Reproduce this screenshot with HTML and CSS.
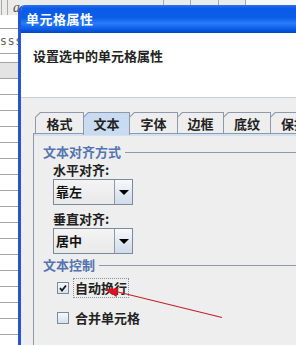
FILE: index.html
```html
<!DOCTYPE html>
<html>
<head>
<meta charset="utf-8">
<link rel="stylesheet" href="styles.css">
</head>
<body>
<div class="sheet">
  <div class="hdr">
    <div class="hc w2"></div>
    <div class="hc w6"></div>
    <div class="hc w156"><span class="ital">a</span></div>
    <div class="hc w27"></div>
    <div class="hc w28"></div>
    <div class="hc w27"></div>
    <div class="hrest"></div>
  </div>
  <div class="row h13"></div>
  <div class="row h24 sss">ssss</div>
  <div class="row h8"></div>
  <div class="row h15 gray"></div>
  <div class="row"></div><div class="row"></div><div class="row"></div><div class="row"></div>
  <div class="row"></div><div class="row"></div><div class="row"></div><div class="row"></div>
  <div class="row"></div><div class="row"></div><div class="row"></div><div class="row"></div>
  <div class="row"></div><div class="row"></div><div class="row"></div><div class="row"></div>
  <div class="row"></div>
</div>

<div class="dialog">
  <div class="titlebar">单元格属性</div>
  <div class="header">设置选中的单元格属性</div>
  <div class="content">
    <div class="tabs">
      <div class="tab t1"><span>格式</span></div>
      <div class="tab t2 sel"><span>文本</span></div>
      <div class="tab t1"><span>字体</span></div>
      <div class="tab t2"><span>边框</span></div>
      <div class="tab t3"><span>底纹</span></div>
      <div class="tab t3"><span>保护</span></div>
    </div>
    <div class="panel">
      <div class="gtitle g1"><span>文本对齐方式</span><i class="gline"></i></div>
      <div class="flabel l1">水平对齐:</div>
      <div class="combo c1"><span class="val">靠左</span><span class="btn"><i class="tri"></i></span></div>
      <div class="flabel l2">垂直对齐:</div>
      <div class="combo c1"><span class="val">居中</span><span class="btn"><i class="tri"></i></span></div>
      <div class="gtitle g2"><span>文本控制</span><i class="gline"></i></div>
      <div class="check r1">
        <span class="box"><svg width="10" height="10" viewBox="0 0 10 10"><path d="M2 5 L4 7.5 L8 2.5" fill="none" stroke="#1a1a1a" stroke-width="1.8"/></svg></span>
        <span class="clabel focus">自动换行</span>
      </div>
      <div class="check r2">
        <span class="box"></span>
        <span class="clabel">合并单元格</span>
      </div>
    </div>
  </div>
</div>

<svg class="annot" width="296" height="345" viewBox="0 0 296 345">
  <line x1="114" y1="291" x2="222" y2="317.5" stroke="#c2202c" stroke-width="1.2"/>
  <polygon points="105,289.5 118.5,288 116.5,297" fill="#e0101c"/>
</svg>
</body>
</html>
```

FILE: styles.css
```css
html, body {
  margin: 0;
  padding: 0;
}
body {
  width: 296px;
  height: 345px;
  overflow: hidden;
  position: relative;
  background: #ffffff;
  font-family: "Noto Sans CJK SC", "Noto Sans", sans-serif;
}

/* background spreadsheet */
.sheet {
  display: flex;
  flex-direction: column;
}
.hdr {
  display: flex;
  height: 15px;
  background: #ebebeb;
}
.hc {
  box-sizing: border-box;
  border-right: 1px solid #a9a9a9;
  height: 15px;
}
.w2 { width: 2px; }
.w6 { width: 6px; }
.w156 { width: 156px; }
.w27 { width: 27px; }
.w28 { width: 28px; }
.hrest { flex: 1; background: #f7f7f7; }
.ital {
  display: block;
  padding-left: 5px;
  font-family: "Liberation Serif", serif;
  font-style: italic;
  font-size: 14px;
  line-height: 15px;
  color: #555;
}
.row {
  height: 15px;
  border-bottom: 1px solid #a4a4a4;
  flex: none;
}
.h13 { height: 13px; }
.h24 { height: 24px; }
.h8 { height: 8px; }
.h15 { height: 15px; }
.gray { background: #e4e4e4; }
.sss {
  font-family: "DejaVu Sans Mono", monospace;
  font-size: 12px;
  line-height: 24px;
  color: #666;
  letter-spacing: 0.5px;
  margin-left: -8px;
}

/* dialog */
.dialog {
  position: absolute;
  left: 18px;
  top: 5px;
  width: 300px;
  height: 345px;
  border-left: 3px solid #2456d4;
  border-top-left-radius: 7px;
  background: #eeeeee;
  display: flex;
  flex-direction: column;
  overflow: hidden;
}
.titlebar {
  height: 28px;
  flex: none;
  padding-left: 5px;
  background: linear-gradient(#2d72ee 0%, #0a5ae8 12%, #0a5de9 45%, #2a7cf8 65%, #0c5ee9 85%, #0046c4 100%);
  color: #ffffff;
  font-weight: 700;
  font-size: 13px;
  letter-spacing: 0.5px;
  line-height: 28px;
}
.header {
  flex: none;
  box-sizing: border-box;
  background: #ffffff;
  border-bottom: 1px solid #c7d0da;
  height: 65px;
  padding: 15px 0 0 12px;
  font-weight: 700;
  font-size: 13px;
  line-height: 16px;
  color: #222;
}
.content {
  flex: 1;
  display: flex;
  flex-direction: column;
  padding: 14px 0 0 12px;
}
.tabs {
  display: flex;
  align-items: flex-start;
  height: 21px;
  flex: none;
  margin-left: 2px;
}
.tab {
  box-sizing: border-box;
  height: 21px;
  padding: 1px 1px 0 1px;
  margin-right: -1px;
  background: #8d9aab;
  clip-path: polygon(5px 0, 100% 0, 100% 100%, 0 100%, 0 5px);
  flex: none;
}
.tab span {
  display: flex;
  align-items: center;
  justify-content: center;
  height: 100%;
  background: #eeeeee;
  clip-path: polygon(4.6px 0, 100% 0, 100% 100%, 0 100%, 0 4.6px);
  font-weight: 700;
  font-size: 13px;
  color: #222;
  padding-top: 1px;
  box-sizing: border-box;
}
.t1 { width: 49px; }
.t2 { width: 47px; }
.t3 { width: 48px; }
.tab.sel {
  height: 23px;
  margin-bottom: -2px;
}
.tab.sel span {
  background: #c8dbf0;
  padding-bottom: 2px;
}
.panel {
  flex: 1;
  border-left: 1px solid #8d9aab;
  border-top: 1px solid #8d9aab;
  box-shadow: inset 0 2px 0 #d3e1f0;
  padding-left: 9px;
  display: flex;
  flex-direction: column;
}
.gtitle {
  display: flex;
  align-items: center;
  font-weight: 700;
  font-size: 13px;
  line-height: 16px;
  color: #5574b0;
  height: 16px;
}
.gline {
  flex: 1;
  height: 1px;
  background: #8d9aab;
  margin-left: 4px;
}
.g1 { margin-top: 10px; }
.g2 { margin-top: 3px; }
.flabel {
  margin-left: 10px;
  font-weight: 700;
  font-size: 13px;
  line-height: 16px;
  color: #222;
}
.l1 { margin-top: 2px; }
.l2 { margin-top: 6px; }
.combo {
  margin-left: 10px;
  margin-top: 1px;
  width: 80px;
  height: 26px;
  box-sizing: border-box;
  border: 1px solid #7b8b9c;
  display: flex;
}
.val {
  flex: 1;
  background: linear-gradient(#f4f4f4, #e9e9e9);
  padding-left: 2px;
  font-weight: 700;
  font-size: 13px;
  line-height: 24px;
  color: #111;
}
.btn {
  width: 17px;
  border-left: 1px solid #8b9aab;
  background: linear-gradient(#f8fafc, #dfe8f2 55%, #cfdcea);
  display: flex;
  align-items: center;
  justify-content: center;
}
.tri {
  width: 0;
  height: 0;
  border-left: 5px solid transparent;
  border-right: 5px solid transparent;
  border-top: 5px solid #000;
}
.check {
  display: flex;
  align-items: center;
  height: 20px;
  margin-left: 14px;
}
.r1 { margin-top: 5px; }
.r2 { margin-top: 10px; }
.box {
  width: 12px;
  height: 12px;
  box-sizing: border-box;
  border: 1px solid #7b8b9c;
  background: linear-gradient(#f6f9fc, #d4e0ec);
  display: flex;
  align-items: center;
  justify-content: center;
}
.clabel {
  margin-left: 4px;
  padding: 0 1px;
  border: 1px solid transparent;
  font-weight: 700;
  font-size: 13px;
  line-height: 18px;
  color: #222;
}
.clabel.focus {
  border: 1px dotted #8893a0;
}

.annot {
  position: absolute;
  left: 0;
  top: 0;
  pointer-events: none;
}
```
